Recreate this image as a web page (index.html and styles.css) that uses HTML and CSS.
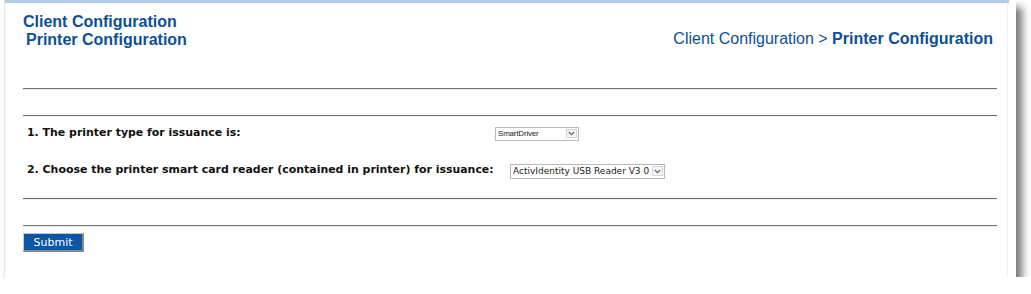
FILE: index.html
```html
<!DOCTYPE html>
<html lang="en">
<head>
  <meta charset="UTF-8" />
  <title>Printer Configuration</title>
  <link rel="stylesheet" href="styles.css">
</head>
<body>
  <div class="panel">
    <div class="top-bar"></div>
    <div class="content">
      <!-- Header Start -->
      <div class="header">
        <div class="titles">
          <div class="title-main">Client Configuration</div>
          <div class="title-sub">Printer Configuration</div>
        </div>
        <div class="breadcrumb">Client Configuration &gt; <b>Printer Configuration</b></div>
      </div>
      <!-- Header End -->

      <div class="rule rule-first"></div>
      <div class="rule rule-gap"></div>

      <div class="form-row row-one">
        <label class="form-label">1. The printer type for issuance is:</label>
        <span class="select-wrap select-small">
          <select class="form-select">
            <option>SmartDriver</option>
          </select>
          <span class="select-arrow">
            <svg width="7" height="5" viewBox="0 0 7 5"><path d="M0.8 1 L3.5 3.7 L6.2 1" fill="none" stroke="#666" stroke-width="1.2"/></svg>
          </span>
        </span>
      </div>
      <div class="form-row row-two">
        <label class="form-label">2. Choose the printer smart card reader (contained in printer) for issuance:</label>
        <span class="select-wrap select-large">
          <select class="form-select">
            <option>ActivIdentity USB Reader V3 0</option>
          </select>
          <span class="select-arrow">
            <svg width="7" height="5" viewBox="0 0 7 5"><path d="M0.8 1 L3.5 3.7 L6.2 1" fill="none" stroke="#666" stroke-width="1.2"/></svg>
          </span>
        </span>
      </div>

      <div class="rule rule-third"></div>
      <div class="rule rule-gap"></div>

      <button class="submit-btn" type="button">Submit</button>
    </div>
  </div>
</body>
</html>
```

FILE: styles.css
```css
body {
  margin: 0;
  background: #fff;
  font-family: Arial, 'Liberation Sans', sans-serif;
}
/* Outer panel with drop shadow */
.panel {
  margin-left: 4px;
  width: 1012px;
  height: 277px;
  background: #fff;
  border-left: 1px solid #e6e6e6;
  box-sizing: border-box;
  box-shadow: 6px 7px 8px rgba(0,0,0,0.55);
}
.top-bar {
  width: 1004px;
  height: 3px;
  background: #b3cde9;
}
.content {
  width: 1003px;
  height: 274px;
  box-sizing: border-box;
  border-right: 1px solid #eeeeee;
  padding: 0 10px 0 18px;
}
/* Header */
.header {
  display: flex;
  justify-content: space-between;
  align-items: flex-end;
  padding-top: 10px;
  padding-right: 4px;
}
.title-main, .title-sub, .breadcrumb {
  font-family: 'Liberation Sans', Arial, sans-serif;
  font-size: 16px;
  line-height: 18px;
  color: #0c4f99;
}
.title-main, .title-sub {
  font-weight: bold;
}
.title-sub {
  padding-left: 3px;
}
.breadcrumb {
  position: relative;
  top: -1px;
}
.breadcrumb b {
  font-weight: bold;
}
/* Horizontal rules */
.rule {
  border-top: 1px solid #707070;
  border-bottom: 1px solid #eeeeee;
  height: 0;
}
.rule-first {
  margin-top: 39px;
}
.rule-gap {
  margin-top: 25px;
}
.rule-third {
  margin-top: 20px;
}
/* Form rows */
.form-row {
  display: flex;
  align-items: center;
  padding-left: 4px;
  height: 17px;
}
.row-one {
  margin-top: 7px;
}
.row-two {
  margin-top: 20px;
}
.form-label {
  width: 468px;
  white-space: nowrap;
  font-family: 'DejaVu Sans', Verdana, sans-serif;
  font-size: 10.95px;
  font-weight: bold;
  color: #111;
}
.select-wrap {
  position: relative;
  display: block;
}
.select-small {
  width: 84px;
  top: 1px;
}
.select-large {
  margin-left: 15px;
  width: 155px;
  top: 2px;
}
.form-select {
  appearance: none;
  -webkit-appearance: none;
  display: block;
  width: 100%;
  height: 15px;
  margin: 0;
  padding: 0 12px 0 2px;
  border: 1px solid #b8b8b8;
  border-radius: 0;
  background: #fff;
  color: #222;
  box-sizing: border-box;
  font-family: 'DejaVu Sans', Verdana, sans-serif;
  font-size: 9px;
  line-height: 13px;
  outline: none;
}
.select-small .form-select {
  height: 14px;
  font-family: 'Liberation Sans', Arial, sans-serif;
  font-size: 8px;
  line-height: 12px;
  letter-spacing: -0.2px;
}
.select-arrow {
  position: absolute;
  top: 2px;
  right: 2px;
  width: 11px;
  height: 10px;
  border: 1px solid #d4d4d4;
  background: #f6f6f6;
  box-sizing: border-box;
  display: flex;
  align-items: center;
  justify-content: center;
  pointer-events: none;
}
.select-small .select-arrow {
  height: 9px;
}
/* Submit button */
.submit-btn {
  display: block;
  margin-top: 6px;
  width: 61px;
  height: 19px;
  padding: 0;
  background: #0b56a6;
  color: #fff;
  font-family: 'DejaVu Sans', Verdana, sans-serif;
  font-size: 11px;
  border: none;
  border-right: 2px solid #8a8a8a;
  border-bottom: 2px solid #8a8a8a;
  border-left: 1px solid #c8c8c8;
  border-top: 1px solid #c8c8c8;
  box-sizing: border-box;
  cursor: pointer;
}
```
